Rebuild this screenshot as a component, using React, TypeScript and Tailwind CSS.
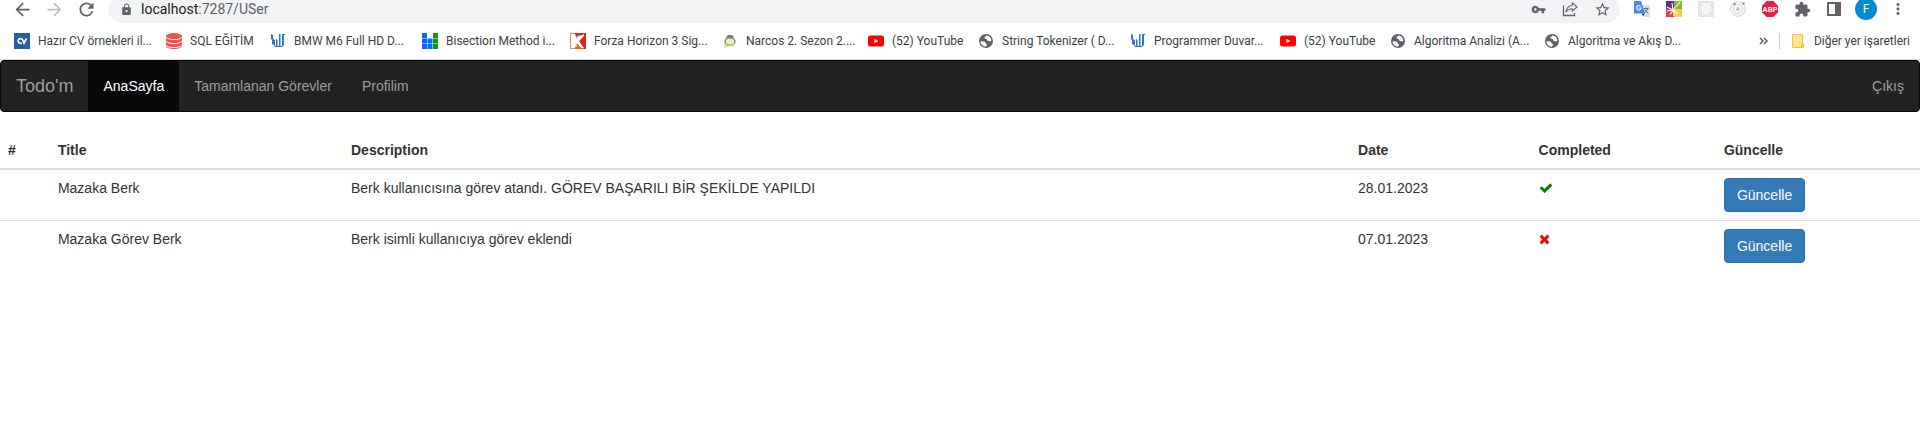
import type { ReactNode } from "react";
import {
  MdArrowBack,
  MdArrowForward,
  MdExtension,
  MdLock,
  MdMoreVert,
  MdRefresh,
  MdStarBorder,
  MdVpnKey,
} from "react-icons/md";

const CvIcon = () => (
  <svg viewBox="0 0 16 16" className="size-4 shrink-0" aria-hidden="true">
    <rect width="16" height="16" fill="#2d5da1" />
    <path d="M7.600 6.200A2.200 2.200 0 1 0 7.600 9.800M8 5.500L10 10 12.500 5.500" fill="none" stroke="#fff" strokeWidth="1.700" />
  </svg>
);

const DatabaseIcon = () => (
  <svg viewBox="0 0 16 16" className="size-4 shrink-0" aria-hidden="true">
    <path
      d="M0 3v10c0 1.700 3.600 3 8 3s8-1.300 8-3V3z"
      fill="#f25344"
    />
    <ellipse cx="8" cy="3" rx="8" ry="3" fill="#f25344" />
    <path
      d="M0 4.200c1 1.500 4 2.400 8 2.400s7-.9 8-2.400M0 8.200c1 1.500 4 2.400 8 2.400s7-.9 8-2.400M0 12.200c1 1.500 4 2.400 8 2.400s7-.9 8-2.400"
      fill="none"
      stroke="#fff"
      strokeWidth="1"
    />
  </svg>
);

const WallpaperIcon = () => (
  <svg viewBox="0 0 16 16" className="size-4 shrink-0" aria-hidden="true">
    <path
      d="M1 1l2 1v4l2 1v6h1V6l1.500 1v6H9V1h1.500v12H12V1h3v1h-1v10l-2 2H5l-1-2-2-1V7L1 6z"
      fill="#2f78c6"
    />
  </svg>
);

const BlocksIcon = () => (
  <svg viewBox="0 0 16 16" className="size-4 shrink-0" aria-hidden="true">
    <path d="M0 0h5v5H0zM0 5.500h5v5H0zM0 11h5v5H0zM5.500 5.500h5v5h-5zM5.500 11h5v5h-5z" fill="#0a66ff" />
    <path d="M11 0h5v5h-5zM11 5.500h5v5h-5zM11 11h5v5h-5z" fill="#0a9a0a" />
  </svg>
);

const KIcon = () => (
  <svg viewBox="0 0 16 16" className="size-4 shrink-0" aria-hidden="true">
    <rect x=".5" y=".5" width="15" height="15" fill="#fff" stroke="#e0905a" />
    <path d="M5 0h11v16h-2L8.500 8.500 14 3V1l-4 2-1-1-3 4z" fill="#e8230c" />
    <path d="M8 9.500L13 16H5v-4z" fill="#e46a0a" />
    <path d="M4 3h2.500v4L11 2l3 0-5 6 5 7h-3L6.500 9.500V14H4z" fill="#fff" />
  </svg>
);

const WatchIcon = () => (
  <svg viewBox="0 0 16 16" className="size-4 shrink-0" aria-hidden="true">
    <path d="M4 4l2-2h4l2 2-2 1.500H5z" fill="#777b6c" />
    <path d="M1 12l3-2 3 4-4 1z" fill="#dcdcd4" />
    <ellipse cx="8" cy="8.500" rx="5" ry="3.700" fill="#e4e8e0" stroke="#858d68" strokeWidth="1.500" />
    <path d="M3.500 10c1 3 6 4 9.500 0" fill="none" stroke="#bfd52c" strokeWidth="1.400" />
  </svg>
);

const YouTubeIcon = () => (
  <svg viewBox="0 0 16 16" className="size-4 shrink-0" aria-hidden="true">
    <rect y="2.500" width="16" height="11" rx="2.500" fill="#f00" />
    <path d="M6.300 5.700v4.600L10.500 8z" fill="#fff" />
  </svg>
);

const GlobeIcon = () => (
  <svg viewBox="0 0 16 16" className="size-4 shrink-0" aria-hidden="true">
    <circle cx="8" cy="8" r="7" fill="#5f6368" />
    <path
      d="M2.500 8.300c1.500-.3 3.200-.2 4.300.5.900.6.400 1.700 1.300 2 .9.200 1.200 1 .6 1.700-.4.500-.9.700-1 1.300C4.600 13.400 2.400 11 2.500 8.300zM8.300 2.500c-.3 1.200-1.900 1.200-1.900 2.300 0 1 1.300.8 2.100 1.200.9.500.6 1.700 1.500 2.100 1 .4 2.300-.1 3.300-.1.300-2.900-2-5.400-5-5.500z"
      fill="#fff"
    />
  </svg>
);

const FolderIcon = () => (
  <svg viewBox="0 0 16 16" className="size-4 shrink-0" aria-hidden="true">
    <path d="M.5 1.500h10v9h1v4H.5z" fill="#ffe591" stroke="#efc540" />
    <path d="M9.500 14.500v-3h2v1.500l-1 1.500z" fill="#ffe591" stroke="#e9bd35" />
  </svg>
);

const ShareIcon = () => (
  <svg viewBox="0 0 16 16" className="size-4" fill="none" stroke="#5f6368" aria-hidden="true">
    <path d="M1.500 4.500v10h11v-2.500" strokeWidth="1.300" />
    <path d="M10.300 1.700L15 6l-4.700 4.200V7.700C7.500 7.700 5.500 8.600 4 11c.4-3.500 2.500-6.300 6.300-6.800z" strokeWidth="1.100" strokeLinejoin="round" />
  </svg>
);

const TranslateIcon = () => (
  <svg viewBox="0 0 16 16" className="size-4" aria-hidden="true">
    <path d="M7 4h9v12h-6z" fill="#dcdfe3" />
    <path d="M9.500 7.500h5M12 6.500v1M13.600 7.500c-.4 2-1.800 3.500-3.400 4.500M10.600 8.500c.7 1.500 2 2.700 3.500 3.500" stroke="#5b7480" fill="none" />
    <path d="M0 0h7l4 12.500H0z" fill="#4687f1" />
    <path d="M7.500 12.500H11L9 15.500z" fill="#2a56c6" />
    <path d="M6.600 5.300A2.200 2.200 0 1 0 7.100 7H5" fill="none" stroke="#fff" strokeWidth="1.100" />
  </svg>
);

const SparkIcon = () => (
  <svg viewBox="0 0 16 16" className="size-4" aria-hidden="true">
    <path d="M0 0h8v8H0z" fill="#6b2c91" />
    <path d="M8 0h8v8H8z" fill="#7fba2c" />
    <path d="M0 8h8v8H0z" fill="#ee3b33" />
    <path d="M8 8h8v8H8z" fill="#f5cf4e" />
    <path d="M7 9L14 1M7 9L6 2M7 9L1 6M7 9L1 10M7 9L4 14M7 9L8 15M7 9L12 13" stroke="#fff" strokeWidth="1.100" />
  </svg>
);

const AtomIcon = () => (
  <svg viewBox="0 0 16 16" className="size-4" aria-hidden="true">
    <rect width="16" height="16" fill="#e4e4e4" />
    <g fill="none" stroke="#fff" strokeWidth="1">
      <ellipse cx="8" cy="8" rx="6" ry="2.400" />
      <ellipse cx="8" cy="8" rx="6" ry="2.400" transform="rotate(60 8 8)" />
      <ellipse cx="8" cy="8" rx="6" ry="2.400" transform="rotate(120 8 8)" />
    </g>
    <circle cx="8" cy="8" r="1.300" fill="#fff" />
  </svg>
);

const OrbitIcon = () => (
  <svg viewBox="0 0 16 16" className="size-4" aria-hidden="true">
    <circle cx="8" cy="8" r="7.300" fill="#fafafa" stroke="#cfcfcf" />
    <circle cx="8" cy="8" r="4.600" fill="none" stroke="#d4d4d4" />
    <circle cx="8" cy="8" r="2" fill="#c4c4c4" />
    <circle cx="4.500" cy="3" r="1.300" fill="#909090" />
    <circle cx="13.500" cy="2.500" r="1.200" fill="#909090" />
  </svg>
);

const AdblockIcon = () => (
  <svg viewBox="0 0 16 16" className="size-4" aria-hidden="true">
    <path d="M4.700 0h6.600L16 4.700v6.600L11.300 16H4.700L0 11.300V4.700z" fill="#ed1e45" />
    <text x="8" y="10.500" textAnchor="middle" fontSize="7" fontWeight="700" fill="#fff" fontFamily="Liberation Sans, sans-serif">
      ABP
    </text>
  </svg>
);

const SidePanelIcon = () => (
  <svg viewBox="0 0 16 16" className="size-4" aria-hidden="true">
    <path d="M1 1h14v14H1zM3 3v10h6V3z" fill="#5f6368" fillRule="evenodd" />
  </svg>
);

const CheckIcon = () => (
  <svg viewBox="0 0 1792 1792" className="size-3.5" fill="#008000" role="img" aria-label="Tamamlandı">
    <path d="M1671 566q0 40-28 68l-724 724-136 136q-28 28-68 28t-68-28l-136-136-362-362q-28-28-28-68t28-68l136-136q28-28 68-28t68 28l294 295 656-657q28-28 68-28t68 28l136 136q28 28 28 68z" />
  </svg>
);

const TimesIcon = () => (
  <svg viewBox="192 0 1408 1792" className="h-3.5 w-[11px]" fill="#ff0000" role="img" aria-label="Tamamlanmadı">
    <path d="M1490 1322q0 40-28 68l-136 136q-28 28-68 28t-68-28l-294-294-294 294q-28 28-68 28t-68-28l-136-136q-28-28-28-68t28-68l294-294-294-294q-28-28-28-68t28-68l136-136q28-28 68-28t68 28l294 294 294-294q28-28 68-28t68 28l136 136q28 28 28 68t-28 68l-294 294 294 294q28 28 28 68z" />
  </svg>
);

function ToolButton({ label, children }: { label: string; children: ReactNode }) {
  return (
    <button type="button" aria-label={label} className="flex h-7 w-8 shrink-0 items-center justify-center text-[#5f6368]">
      {children}
    </button>
  );
}

const bookmarks = [
  { icon: <CvIcon />, title: "Hazır CV örnekleri il...", width: "w-[152px]" },
  { icon: <DatabaseIcon />, title: "SQL EĞİTİM", width: "w-[104px]" },
  { icon: <WallpaperIcon />, title: "BMW M6 Full HD D...", width: "w-[152px]" },
  { icon: <BlocksIcon />, title: "Bisection Method i...", width: "w-[148px]" },
  { icon: <KIcon />, title: "Forza Horizon 3 Sig...", width: "w-[152px]" },
  { icon: <WatchIcon />, title: "Narcos 2. Sezon 2....", width: "w-[146px]" },
  { icon: <YouTubeIcon />, title: "(52) YouTube", width: "w-[110px]" },
  { icon: <GlobeIcon />, title: "String Tokenizer ( D...", width: "w-[152px]" },
  { icon: <WallpaperIcon />, title: "Programmer Duvar...", width: "w-[150px]" },
  { icon: <YouTubeIcon />, title: "(52) YouTube", width: "w-[110px]" },
  { icon: <GlobeIcon />, title: "Algoritma Analizi (A...", width: "w-[154px]" },
  { icon: <GlobeIcon />, title: "Algoritma ve Akış D...", width: "w-[154px]" },
];

const tasks = [
  {
    title: "Mazaka Berk",
    description: "Berk kullanıcısına görev atandı. GÖREV BAŞARILI BİR ŞEKİLDE YAPILDI",
    date: "28.01.2023",
    completed: true,
  },
  {
    title: "Mazaka Görev Berk",
    description: "Berk isimli kullanıcıya görev eklendi",
    date: "07.01.2023",
    completed: false,
  },
];

function BrowserBar() {
  return (
    <header className="border-b border-[#d5d7da] bg-white font-[Roboto,sans-serif]">
      <div className="flex h-[23px] items-end overflow-hidden px-1.5">
        <ToolButton label="Geri"><MdArrowBack size={21} /></ToolButton>
        <ToolButton label="İleri"><MdArrowForward size={21} className="text-[#bcbec1]" /></ToolButton>
        <ToolButton label="Yenile"><MdRefresh size={21} /></ToolButton>
        <div className="mx-1.5 flex h-7 min-w-0 grow items-center rounded-full bg-[#f1f3f4] pr-0.5 pl-3 text-sm">
          <MdLock size={13} className="shrink-0 text-[#5f6368]" />
          <label htmlFor="address" className="ml-2 text-[#202124]">localhost</label>
          <input id="address" defaultValue=":7287/USer" className="min-w-0 grow bg-transparent text-[#5f6368] outline-none" />
          <ToolButton label="Şifreler"><MdVpnKey size={15} /></ToolButton>
          <ToolButton label="Paylaş"><ShareIcon /></ToolButton>
          <ToolButton label="Yer işareti ekle"><MdStarBorder size={17} /></ToolButton>
        </div>
        <ToolButton label="Çeviri"><TranslateIcon /></ToolButton>
        <ToolButton label="Renkler"><SparkIcon /></ToolButton>
        <ToolButton label="Geliştirici araçları"><AtomIcon /></ToolButton>
        <ToolButton label="Yörünge"><OrbitIcon /></ToolButton>
        <ToolButton label="Reklam engelleyici"><AdblockIcon /></ToolButton>
        <ToolButton label="Uzantılar"><MdExtension size={17} /></ToolButton>
        <ToolButton label="Yan panel"><SidePanelIcon /></ToolButton>
        <ToolButton label="Profil">
          <span className="flex size-[22px] items-center justify-center rounded-full bg-[#0488d1] text-xs text-white">F</span>
        </ToolButton>
        <ToolButton label="Menü"><MdMoreVert size={18} /></ToolButton>
      </div>
      <nav aria-label="Yer işaretleri" className="flex h-9 items-center pr-2.5 pl-3.5 text-xs text-[#3c4043]">
        {bookmarks.map((bookmark, index) => (
          <a key={index} href="#" className={`flex shrink-0 items-center gap-2 whitespace-nowrap ${bookmark.width}`}>
            {bookmark.icon}
            {bookmark.title}
          </a>
        ))}
        <button type="button" aria-label="Diğer" className="mr-2.5 ml-auto">
          <svg viewBox="0 0 10 8" className="h-2 w-2.5" fill="none" stroke="#5f6368" strokeWidth="1.500" aria-hidden="true">
            <path d="M1 1l3 3-3 3M5 1l3 3-3 3" />
          </svg>
        </button>
        <a href="#" className="flex shrink-0 items-center gap-1.5 border-l border-[#c9ccd0] pl-3 whitespace-nowrap">
          <FolderIcon />
          Diğer yer işaretleri
        </a>
      </nav>
    </header>
  );
}

function Navbar() {
  return (
    <nav className="mb-5 flex h-[52px] rounded border border-[#080808] bg-[#222] leading-5 text-[#9d9d9d]">
      <a href="#" className="p-[15px] text-lg leading-5">Todo'm</a>
      <a href="#" aria-current="page" className="bg-[#080808] p-[15px] text-white">AnaSayfa</a>
      <a href="#" className="p-[15px]">Tamamlanan Görevler</a>
      <a href="#" className="p-[15px]">Profilim</a>
      <a href="#" className="ml-auto p-[15px]">Çıkış</a>
    </nav>
  );
}

function TaskTable() {
  return (
    <table className="w-full border-collapse text-left leading-5">
      <thead>
        <tr className="border-b-2 border-[#ddd]">
          <th className="p-2">#</th>
          <th className="p-2">Title</th>
          <th className="p-2">Description</th>
          <th className="p-2">Date</th>
          <th className="p-2">Completed</th>
          <th className="p-2">Güncelle</th>
        </tr>
      </thead>
      <tbody>
        {tasks.map((task) => (
          <tr key={task.title} className="border-t border-[#ddd] align-top first:border-t-0">
            <td className="p-2" />
            <td className="p-2">{task.title}</td>
            <td className="p-2">{task.description}</td>
            <td className="p-2">{task.date}</td>
            <td className="p-2">
              <span className="flex h-5 items-center">{task.completed ? <CheckIcon /> : <TimesIcon />}</span>
            </td>
            <td className="p-2">
              <button type="button" className="block rounded border border-[#2e6da4] bg-[#337ab7] px-3 py-1.5 text-white">
                Güncelle
              </button>
            </td>
          </tr>
        ))}
      </tbody>
    </table>
  );
}

export default function App() {
  return (
    <div className="min-h-screen bg-white font-['Liberation_Sans',Arial,sans-serif] text-sm text-[#333]">
      <BrowserBar />
      <main>
        <Navbar />
        <TaskTable />
      </main>
    </div>
  );
}
